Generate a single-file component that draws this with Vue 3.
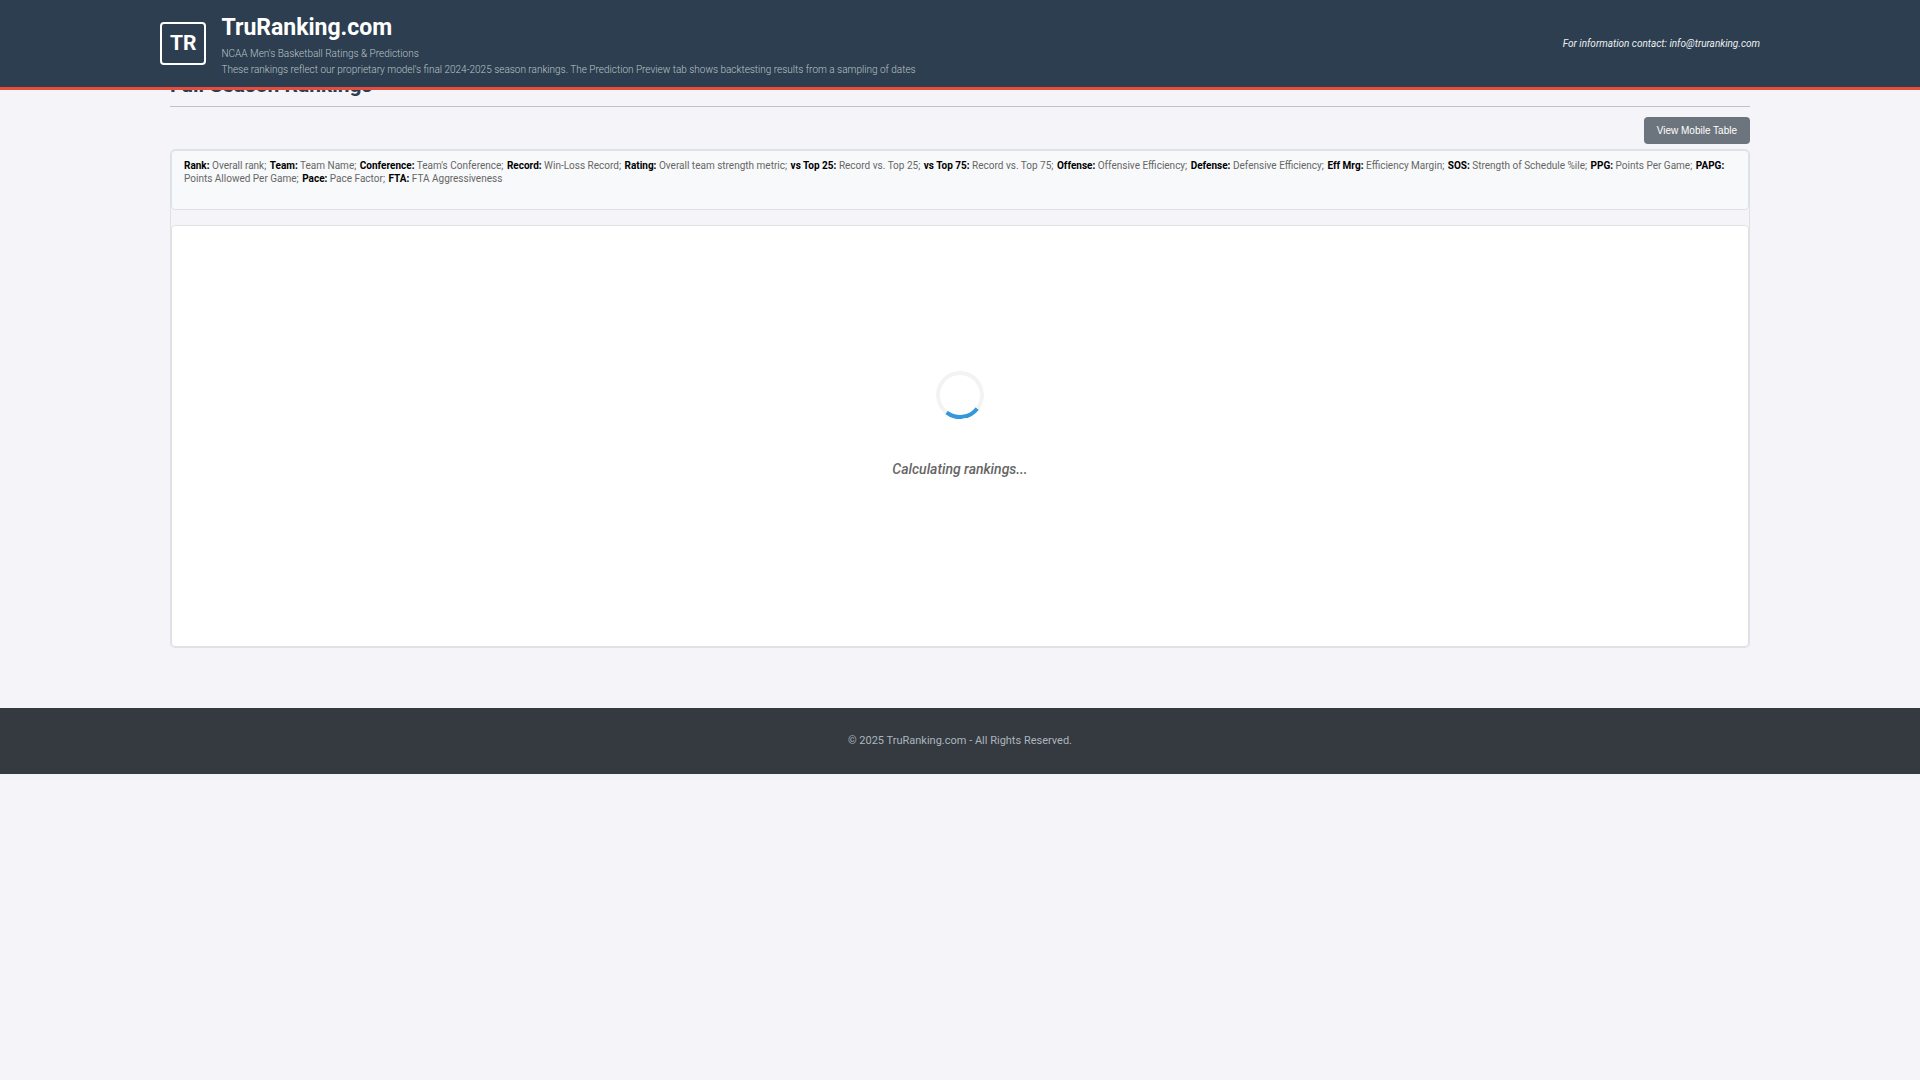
<script setup>
const legend = [
  ['Rank', 'Overall rank'],
  ['Team', 'Team Name'],
  ['Conference', "Team's Conference"],
  ['Record', 'Win-Loss Record'],
  ['Rating', 'Overall team strength metric'],
  ['vs Top 25', 'Record vs. Top 25'],
  ['vs Top 75', 'Record vs. Top 75'],
  ['Offense', 'Offensive Efficiency'],
  ['Defense', 'Defensive Efficiency'],
  ['Eff Mrg', 'Efficiency Margin'],
  ['SOS', 'Strength of Schedule %ile'],
  ['PPG', 'Points Per Game'],
  ['PAPG', 'Points Allowed Per Game'],
  ['Pace', 'Pace Factor'],
  ['FTA', 'FTA Aggressiveness'],
]
</script>

<template>
  <header class="site-header">
    <div class="header-inner">
      <div class="logo">TR</div>
      <div class="brand">
        <h1>TruRanking.com</h1>
        <p>NCAA Men's Basketball Ratings &amp; Predictions</p>
        <p>These rankings reflect our proprietary model's final 2024-2025 season rankings. The Prediction Preview tab shows backtesting results from a sampling of dates</p>
      </div>
      <div class="contact">For information contact: info@truranking.com</div>
    </div>
  </header>

  <main class="content">
    <h2>Full Season Rankings</h2>
    <div class="toolbar">
      <button type="button">View Mobile Table</button>
    </div>
    <section class="rankings">
      <p class="legend">
        <template v-for="([term, text], i) in legend" :key="term"><strong>{{ term }}:</strong>{{ ' ' + text }}<span v-if="i < legend.length - 1" class="separator">;</span>{{ ' ' }}</template>
      </p>
      <div class="loading" role="status">
        <div class="spinner"></div>
        <p>Calculating rankings...</p>
      </div>
    </section>
  </main>

  <footer class="site-footer">© 2025 TruRanking.com - All Rights Reserved.</footer>
</template>

<style>
body {
  margin: 0;
  background: #f4f4f9;
  font-family: Roboto, "Liberation Sans", sans-serif;
}
</style>

<style scoped>
h1, h2, p {
  margin: 0;
}
.site-header {
  position: fixed;
  top: 0;
  left: 0;
  right: 0;
  z-index: 10;
  background: #2c3e50;
  border-bottom: 3px solid #e74c3c;
  color: #fff;
}
.header-inner {
  display: flex;
  align-items: center;
  max-width: 1600px;
  margin: 0 auto;
  padding: 9px 0;
}
.logo {
  padding: 8px;
  border: 2px solid #fff;
  border-radius: 4px;
  font-size: 21px;
  font-weight: 700;
  line-height: 23px;
}
.brand {
  flex: 1;
  margin-left: 15px;
}
.brand h1 {
  font-size: 23px;
  line-height: 37px;
}
.brand p {
  color: #bdc3c7;
  font-size: 10px;
  font-weight: 300;
  line-height: 16px;
}
.contact {
  color: #ecf0f1;
  font-size: 10px;
  font-style: italic;
}
.content {
  max-width: 1580px;
  margin: 0 auto;
  padding: 72px 0 60px;
}
h2 {
  padding-bottom: 8px;
  border-bottom: 1px solid #bdc3c7;
  color: #2c3e50;
  font-size: 21px;
  line-height: 26px;
}
.toolbar {
  display: flex;
  justify-content: flex-end;
  margin: 10px 0 5px;
}
button {
  padding: 6px 13px;
  border: 0;
  border-radius: 4px;
  background: #6c757d;
  color: #fff;
  font-family: "Liberation Sans", Arial, sans-serif;
  font-size: 10px;
  line-height: 15px;
}
.rankings {
  border: 1px solid #dee2e6;
  border-radius: 5px;
}
.legend {
  min-height: 40px;
  margin-bottom: 15px;
  padding: 8px 12px 10px;
  border: 1px solid #dee2e6;
  border-radius: 4px;
  background: #f8f9fa;
  color: #666;
  font-size: 10px;
  line-height: 13px;
}
.legend strong {
  color: #000;
}
.separator {
  margin-right: 1px;
}
.loading {
  display: flex;
  flex-direction: column;
  align-items: center;
  justify-content: center;
  gap: 40px;
  min-height: 398px;
  padding-bottom: 22px;
  border: 1px solid #dee2e6;
  border-radius: 4px;
  background: #fff;
}
.loading p {
  color: #666;
  font-size: 14px;
  font-style: italic;
  font-weight: 500;
  line-height: 20px;
}
.spinner {
  width: 40px;
  height: 40px;
  border: 4px solid #f3f3f3;
  border-top-color: #3498db;
  border-radius: 50%;
  transform: rotate(173deg);
}
.site-footer {
  padding: 24px 20px;
  background: #343a40;
  color: #adb5bd;
  font-size: 11px;
  line-height: 18px;
  text-align: center;
}
</style>
